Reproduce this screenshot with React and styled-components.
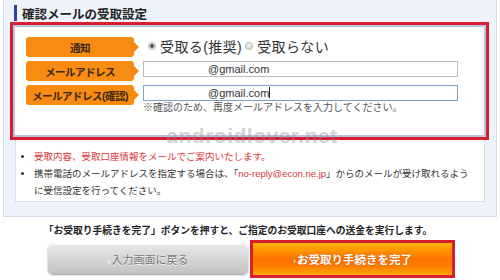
import React from 'react';
import styled, { createGlobalStyle } from 'styled-components';

const GlobalStyle = createGlobalStyle`
    html, body {
        margin: 0;
        padding: 0;
        background: #fff;
    }
    body {
        font-family: "Liberation Sans", "Noto Sans CJK JP", sans-serif;
        color: #333;
    }
`;

const Page = styled.div`
    position: relative;
    width: 500px;
    height: 280px;
    overflow: hidden;
`;

const Panel = styled.section`
    margin: 0 3px;
    padding: 5px 11px 14px;
    background: #eef2fa;
    border: 1px solid #d3dbea;
    border-top: none;
`;

const Heading = styled.h2`
    display: flex;
    align-items: center;
    gap: 5px;
    height: 16px;
    margin: 0 0 1px -1px;
    font-size: 12.5px;
    font-weight: bold;
    color: #222;

    &::before {
        content: '';
        width: 3px;
        height: 16px;
        background: #2c4696;
    }
`;

const WhiteBox = styled.div`
    background: #fff;
    border: 1px solid #d6deec;
    padding-bottom: 2px;
`;

const FormArea = styled.div`
    margin: -1px -5px 0 -6px;
    padding: 12px 10px 23px 13px;
    border: 3px solid #d81e2c;
    box-shadow: inset 0 0 0 2px #b9c4df;
    background: #fff;
    display: grid;
    grid-template-columns: 108px 315px;
    column-gap: 9px;
    row-gap: 4px;
    align-items: start;
`;

const Label = styled.div`
    position: relative;
    height: 20px;
    background: #f88b12;
    border-radius: 3px;
    display: flex;
    align-items: center;
    justify-content: center;
    font-size: 10.5px;
    font-weight: bold;
    letter-spacing: -0.5px;
    color: #3a2812;

    &::after {
        content: '';
        position: absolute;
        right: -5px;
        top: 5px;
        border-left: 5px solid #f88b12;
        border-top: 5px solid transparent;
        border-bottom: 5px solid transparent;
    }
`;

const RadioGroup = styled.div`
    display: flex;
    align-items: center;
    height: 18px;
    padding-left: 5px;
    font-size: 14px;
    color: #333;
`;

const RadioDot = styled.span`
    width: 8px;
    height: 8px;
    box-sizing: border-box;
    border-radius: 50%;
    border: 1px solid #b0b0b0;
    background: ${p => (p.$checked
        ? 'radial-gradient(circle, #555 0 1.6px, #e4e4e4 2.2px)'
        : 'linear-gradient(#f4f4f4, #d8d8d8)')};
    margin-right: 4px;
`;

const RadioText = styled.span`
    letter-spacing: 0.4px;
    margin-right: 3px;
`;

const FieldCell = styled.div`
    display: flex;
    flex-direction: column;
`;

const Field = styled.div`
    width: 315px;
    height: 16px;
    box-sizing: border-box;
    border: 1px solid ${p => (p.$focused ? '#7e9fcc' : '#b9b9b9')};
    background: #fff;
    padding-left: 64px;
    font-family: "Liberation Sans", sans-serif;
    font-size: 11px;
    line-height: 14px;
    color: #333;
`;

const Caret = styled.span`
    display: inline-block;
    width: 1px;
    height: 11px;
    background: #222;
    vertical-align: -1px;
`;

const Note = styled.div`
    margin-top: 1px;
    font-size: 10px;
    line-height: 12px;
    color: #555;
`;

const Notes = styled.ul`
    list-style: none;
    margin: 8px 0 0;
    padding: 0;
`;

const NoteItem = styled.li`
    position: relative;
    padding-left: 18px;
    font-size: 9.5px;
    line-height: 17px;
    white-space: nowrap;
    color: ${p => (p.$alert ? '#d9383a' : '#333')};

    &::before {
        content: ${p => (p.$plain ? 'none' : "''")};
        position: absolute;
        left: 5px;
        top: 7px;
        width: 3px;
        height: 3px;
        border-radius: 50%;
        background: #333;
    }
`;

const Red = styled.span`
    color: #d9383a;
`;

const Instruction = styled.p`
    margin: 7px 0 0;
    padding-right: 24px;
    text-align: center;
    font-size: 9.75px;
    line-height: 14px;
    font-weight: bold;
    color: #222;
`;

const ButtonRow = styled.div`
    display: flex;
    align-items: center;
    gap: 2px;
    margin-top: 2px;
    padding-left: 48px;
`;

const BackButton = styled.button`
    width: 200px;
    height: 30px;
    border: none;
    border-radius: 5px;
    background: linear-gradient(#e8e8e8, #d3d3d3 55%, #c2c2c2);
    box-shadow: 0 1px 2px rgba(0, 0, 0, 0.4), inset 0 1px 0 #f8f8f8;
    font-family: inherit;
    font-size: 11px;
    color: #7a7a7a;
    text-shadow: 0 1px 0 #f4f4f4;
    padding: 0;
`;

const Chevron = styled.span`
    font-size: 9px;
    color: ${p => p.$color || '#fff'};
    margin-right: 1px;
`;

const Highlight = styled.div`
    width: 205px;
    height: 38px;
    box-sizing: border-box;
    border: 3px solid #d81e2c;
    display: flex;
`;

const SubmitButton = styled.button`
    flex: 1;
    border: none;
    padding: 0;
    background: linear-gradient(#ffb800 0%, #ff9c00 18%, #ff7300 50%, #ff7a00 70%, #ffa600 100%);
    font-family: inherit;
    font-size: 11.5px;
    font-weight: bold;
    color: #fff;
    text-shadow: 0 0 2px rgba(190, 70, 0, 0.9);
`;

const Watermark = styled.div`
    position: absolute;
    left: 0;
    right: 0;
    top: 124px;
    text-align: center;
    padding-left: 4px;
    font-family: "Liberation Sans", sans-serif;
    font-size: 21px;
    font-weight: bold;
    letter-spacing: 0.5px;
    color: rgba(140, 140, 140, 0.4);
    pointer-events: none;
`;

export default function App() {
    return (
        <Page>
            <GlobalStyle />
            <Panel>
                <Heading>確認メールの受取設定</Heading>
                <WhiteBox>
                    <FormArea>
                        <Label>通知</Label>
                        <RadioGroup>
                            <RadioDot $checked />
                            <RadioText>受取る(推奨)</RadioText>
                            <RadioDot />
                            <RadioText>受取らない</RadioText>
                        </RadioGroup>

                        <Label>メールアドレス</Label>
                        <FieldCell>
                            <Field>@gmail.com</Field>
                        </FieldCell>

                        <Label>メールアドレス(確認)</Label>
                        <FieldCell>
                            <Field $focused>@gmail.com<Caret /></Field>
                            <Note>※確認のため、再度メールアドレスを入力してください。</Note>
                        </FieldCell>
                    </FormArea>

                    <Notes>
                        <NoteItem $alert>受取内容、受取口座情報をメールでご案内いたします。</NoteItem>
                        <NoteItem>
                            携帯電話のメールアドレスを指定する場合は、「<Red>no-reply@econ.ne.jp</Red>」からのメールが受け取れるよう
                        </NoteItem>
                        <NoteItem $plain>に受信設定を行ってください。</NoteItem>
                    </Notes>
                </WhiteBox>
            </Panel>

            <Instruction>
                「お受取り手続きを完了」ボタンを押すと、ご指定のお受取口座への送金を実行します。
            </Instruction>
            <ButtonRow>
                <BackButton><Chevron>›</Chevron>入力画面に戻る</BackButton>
                <Highlight>
                    <SubmitButton><Chevron $color="#ffe2b0">›</Chevron>お受取り手続きを完了</SubmitButton>
                </Highlight>
            </ButtonRow>

            <Watermark>androidlover.net</Watermark>
        </Page>
    );
}
